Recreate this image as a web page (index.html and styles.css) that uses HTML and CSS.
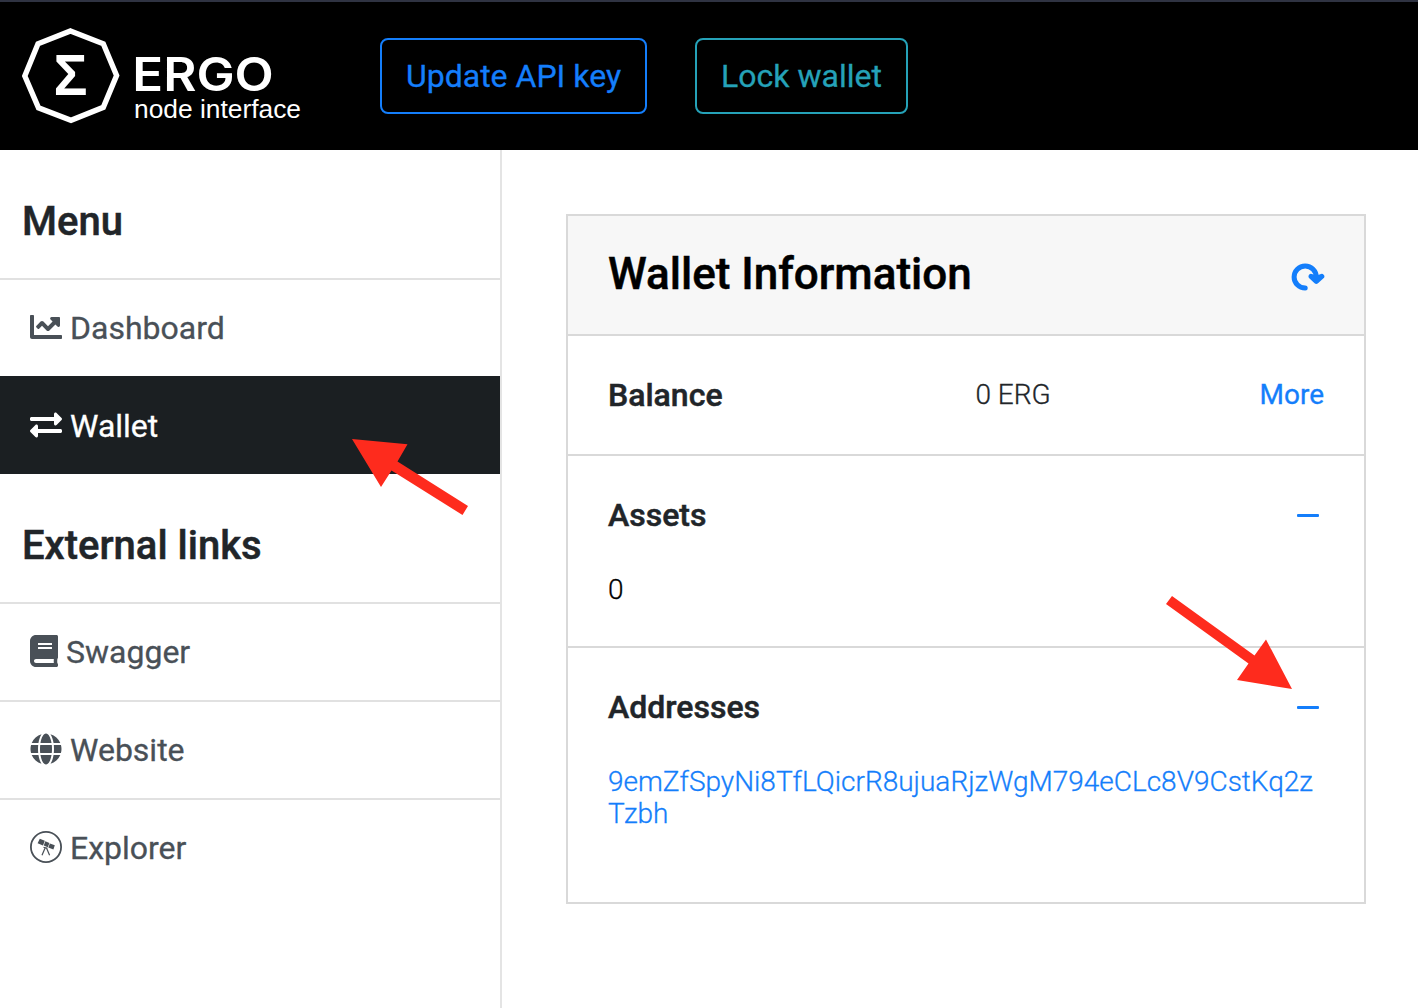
FILE: index.html
```html
<!DOCTYPE html>
<html lang="en">
<head>
<meta charset="utf-8">
<title>Ergo node interface</title>
<link rel="stylesheet" href="styles.css">
</head>
<body>
<header class="topbar">
  <svg class="logo" width="310" height="148" viewBox="0 2 310 148" role="img" aria-label="Ergo node interface">
    <path class="logo-ring" d="M70.5 31 103.3 43.8 116.6 75.5 103.3 107.3 71 120.3 38.5 107.8 24.8 76 38 43.8Z"/>
    <text class="logo-sigma" x="53.5" y="95.3" textLength="34" lengthAdjust="spacingAndGlyphs">Σ</text>
    <text class="logo-name" x="132.3" y="91.3" textLength="141.5" lengthAdjust="spacingAndGlyphs">ERGO</text>
    <text class="logo-sub" x="134" y="118" textLength="167" lengthAdjust="spacingAndGlyphs">node interface</text>
  </svg>
  <button class="btn btn-primary">Update API key</button>
  <button class="btn btn-info">Lock wallet</button>
</header>
<div class="layout">
  <nav class="sidebar">
    <h2 class="nav-title">Menu</h2>
    <a class="nav-item"><svg class="icon" width="32" height="32" viewBox="0 0 512 512"><path d="M496 384H64V80c0-8.84-7.16-16-16-16H16C7.16 64 0 71.16 0 80v336c0 17.67 14.33 32 32 32h464c8.84 0 16-7.16 16-16v-32c0-8.84-7.16-16-16-16zM464 96H345.94c-21.38 0-32.09 25.85-16.97 40.97l32.4 32.4L288 242.75l-73.37-73.37c-12.5-12.5-32.76-12.5-45.25 0l-68.69 68.69c-6.25 6.25-6.25 16.38 0 22.63l22.62 22.62c6.25 6.25 16.38 6.25 22.63 0L192 237.25l73.37 73.37c12.5 12.5 32.76 12.5 45.25 0l96-96 32.4 32.4c15.12 15.12 40.97 4.41 40.97-16.97V112c.01-8.84-7.15-16-15.99-16z"/></svg><span>Dashboard</span></a>
    <a class="nav-item active"><svg class="icon" width="32" height="32" viewBox="0 0 512 512"><path d="M0 168v-16c0-13.255 10.745-24 24-24h360V80c0-21.367 25.899-32.042 40.971-16.971l80 80c9.372 9.373 9.372 24.569 0 33.941l-80 80C409.956 271.982 384 261.456 384 240v-48H24c-13.255 0-24-10.745-24-24zm488 152H128v-48c0-21.314-25.862-32.08-40.971-16.971l-80 80c-9.372 9.373-9.372 24.569 0 33.941l80 80C102.057 463.997 128 453.437 128 432v-48h360c13.255 0 24-10.745 24-24v-16c0-13.255-10.745-24-24-24z"/></svg><span>Wallet</span></a>
    <h2 class="nav-title">External links</h2>
    <a class="nav-item"><svg class="icon" width="28" height="32" viewBox="0 0 448 512"><path d="M448 360V24c0-13.3-10.7-24-24-24H96C43 0 0 43 0 96v320c0 53 43 96 96 96h328c13.3 0 24-10.7 24-24v-16c0-7.5-3.5-14.3-8.9-18.7-4.2-15.4-4.2-59.3 0-74.7 5.4-4.3 8.9-11.1 8.9-18.6zM128 134c0-3.3 2.7-6 6-6h212c3.3 0 6 2.7 6 6v20c0 3.3-2.7 6-6 6H134c-3.3 0-6-2.7-6-6v-20zm0 64c0-3.3 2.7-6 6-6h212c3.3 0 6 2.7 6 6v20c0 3.3-2.7 6-6 6H134c-3.3 0-6-2.7-6-6v-20zm253.4 250H96c-17.7 0-32-14.3-32-32 0-17.6 14.4-32 32-32h285.4c-1.9 17.1-1.9 46.9 0 64z"/></svg><span>Swagger</span></a>
    <a class="nav-item"><svg class="icon" width="32" height="32" viewBox="-8 0 512 512"><path d="M336.5 160C322 70.7 287.8 8 248 8s-74 62.7-88.5 152h177zM152 256c0 22.2 1.2 43.5 3.3 64h185.3c2.1-20.5 3.3-41.8 3.3-64s-1.2-43.5-3.3-64H155.3c-2.1 20.5-3.3 41.8-3.3 64zm324.7-96c-28.6-67.9-86.5-120.4-158-141.6 24.4 33.8 41.2 84.7 50 141.6h108zM177.2 18.4C105.8 39.6 47.8 92.1 19.3 160h108c8.7-56.9 25.5-107.8 49.9-141.6zM487.4 192H372.7c2.1 21 3.3 42.5 3.3 64s-1.2 43-3.3 64h114.6c5.5-20.5 8.6-41.8 8.6-64s-3.1-43.5-8.5-64zM120 256c0-21.5 1.2-43 3.3-64H8.6C3.2 212.5 0 233.8 0 256s3.2 43.5 8.6 64h114.6c-2-21-3.2-42.5-3.2-64zm39.5 96c14.5 89.3 48.7 152 88.5 152s74-62.7 88.5-152h-177zm159.3 141.6c71.4-21.2 129.4-73.7 158-141.6h-108c-8.8 56.9-25.6 107.8-50 141.6zM19.3 352c28.6 67.9 86.5 120.4 158 141.6-24.4-33.8-41.2-84.7-50-141.6h-108z"/></svg><span>Website</span></a>
    <a class="nav-item"><svg class="icon" width="32" height="32" viewBox="0 0 32 32"><circle class="line" cx="16" cy="16" r="15.1" stroke-width="1.8"/><path d="M9.8 7.8 14.8 9.8 13 14.6 7.6 12.2ZM15.3 10.2 19.4 12 17.8 16.2 13.8 14.4ZM19.9 12.4 24.8 14.2 23.4 18.4 18.3 16.4Z"/><path class="line" d="M15.3 16.6 12 24.3M16.4 16.8 19.6 24.3M13.5 16.2l4 1.2" stroke-width="1.2"/></svg><span>Explorer</span></a>
  </nav>
  <main class="content">
    <section class="card">
      <div class="card-head">
        <h1 class="card-title">Wallet Information</h1>
        <svg class="refresh" width="34" height="30" viewBox="1291 262 34 30"><path d="M1305.2 288.1A11.1 11.1 0 1 1 1316.3 277V279M1311 276.4 1316.3 281.4 1321.8 276.4L1316.3 278.4Z"/></svg>
      </div>
      <div class="row balance">
        <h3 class="label">Balance</h3>
        <span class="amount">0 ERG</span>
        <a class="more">More</a>
      </div>
      <div class="row assets">
        <div class="row-head"><h3 class="label">Assets</h3><span class="minus"></span></div>
        <p class="value">0</p>
      </div>
      <div class="row addresses">
        <div class="row-head"><h3 class="label">Addresses</h3><span class="minus"></span></div>
        <a class="value address">9emZfSpyNi8TfLQicrR8ujuaRjzWgM794eCLc8V9CstKq2zTzbh</a>
      </div>
    </section>
  </main>
</div>
<svg class="arrows" width="1418" height="1008" viewBox="0 0 1418 1008">
  <path d="M352 439 407.5 444.2 397.5 461.5 468 506 462.5 515 391.5 470.5 381 487Z"/>
  <path d="M1292 689 1237 680 1248.5 663.5 1166 604 1172 596 1254.5 655.5 1266 639.5Z"/>
</svg>
</body>
</html>
```
FILE: styles.css
```css
* { box-sizing: border-box; }
body {
  margin: 0;
  width: 1418px;
  height: 1008px;
  position: relative;
  overflow: hidden;
  background: #fff;
  color: #212529;
  font-family: Roboto, "Liberation Sans", sans-serif;
  -webkit-text-stroke: 0.3px;
  display: flex;
  flex-direction: column;
}
h1, h2, h3, p { margin: 0; font-weight: 500; }
h1, h2, h3 { -webkit-text-stroke: 0.5px; }

.topbar {
  height: 150px;
  flex: none;
  display: flex;
  align-items: center;
  background: #000;
  border-top: 2px solid #2f3342;
}
.logo { flex: none; margin-right: 70px; -webkit-text-stroke: 0; }
.logo-ring { fill: none; stroke: #fff; stroke-width: 5.4; }
.logo text { fill: #fff; }
.logo-sigma { font: 700 57px "Liberation Sans", sans-serif; }
.logo-name { font: 600 46px Inter, sans-serif; }
.logo-sub { font: 400 26px "Liberation Sans", sans-serif; }
.btn {
  height: 76px;
  padding: 0 0 1px;
  border: 2px solid;
  border-radius: 8px;
  background: transparent;
  font: 400 32px Roboto, sans-serif;
  -webkit-text-stroke: 0.3px;
}
.btn-primary { width: 267px; color: #147efb; margin-right: 48px; }
.btn-info { width: 213px; color: #25a2b8; }

.layout { flex: 1; display: flex; }
.sidebar { width: 502px; flex: none; border-right: 2px solid #e4e4e4; }
.nav-title {
  height: 128px;
  padding: 8px 0 0 22px;
  line-height: 128px;
  font-size: 40px;
}
.nav-item {
  height: 98px;
  border-top: 2px solid #e1e1e1;
  padding: 0 0 2px 30px;
  display: flex;
  align-items: center;
  gap: 8px;
  color: #495057;
  font-size: 32px;
}
.nav-item span { padding-top: 1px; }
.nav-item.active { background: #1b1f22; color: #fff; border-color: #1b1f22; }
.icon { fill: currentColor; }
.line { fill: none; stroke: currentColor; }

.content { padding: 64px; }
.card { width: 800px; height: 690px; border: 2px solid #d9d9d9; }
.card-head {
  height: 118px;
  padding: 0 39px 0 40px;
  display: flex;
  align-items: center;
  justify-content: space-between;
  background: #f7f7f7;
}
.card-title { font-size: 44px; padding-bottom: 2px; color: #000; }
.refresh { margin-top: 3px; fill: none; stroke: #147efb; stroke-width: 5; stroke-linecap: round; stroke-linejoin: round; }
.row { border-top: 2px solid #d9d9d9; padding: 0 40px; }
.label { font-size: 32px; line-height: 38px; }
.balance {
  height: 120px;
  display: grid;
  grid-template-columns: 367px 1fr auto;
  align-items: center;
  font-size: 28px;
}
.amount { font-weight: 300; padding: 0 0 2px 0.5px; }
.more { color: #147efb; padding-bottom: 2px; }
.assets { height: 192px; padding-top: 40px; }
.addresses { padding-top: 40px; }
.row-head { display: flex; align-items: center; justify-content: space-between; }
.minus { width: 22px; height: 3px; margin-right: 5px; border-radius: 1px; background: #147efb; }
.value {
  display: block;
  margin-top: 40px;
  font-size: 28px;
  line-height: 32px;
  font-weight: 300;
  color: #000;
  overflow-wrap: anywhere;
}
.address { color: #147efb; }
.arrows { position: absolute; left: 0; top: 0; fill: #fe2b1d; pointer-events: none; }
```
